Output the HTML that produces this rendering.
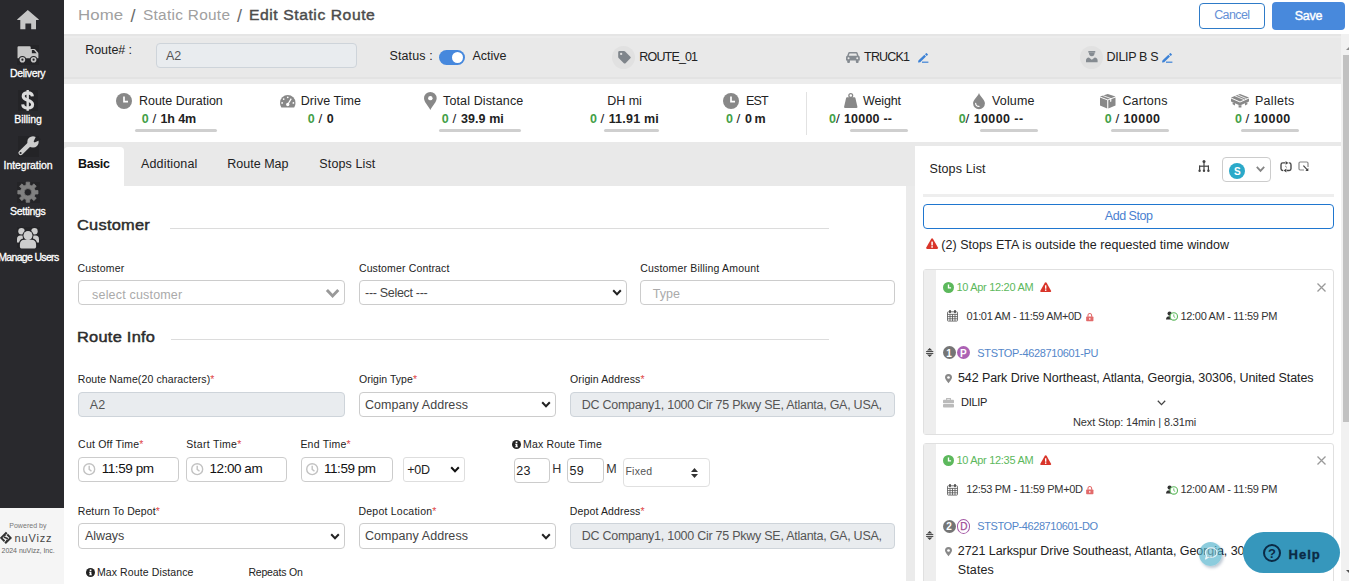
<!DOCTYPE html><html><head><meta charset="utf-8"><title>Edit Static Route</title><style>

html,body{margin:0;padding:0;width:1349px;height:584px;overflow:hidden;}
body{background:#fff;position:relative;font-family:"Liberation Sans",sans-serif;}
#root{position:absolute;left:0;top:0;width:1349px;height:584px;overflow:hidden;background:#fff;}
.b{position:absolute;box-sizing:border-box;}
.t{position:absolute;white-space:nowrap;line-height:1;margin:0;padding:0;}
.i{position:absolute;overflow:visible;}

</style></head><body><div id="root">
<div class="b" style="left:64px;top:34px;width:1277px;height:50px;background:#ececec;"></div>
<div class="b" style="left:64px;top:34px;width:1277px;height:2px;background:#e5e5e5;"></div>
<div class="b" style="left:64px;top:38px;width:1277px;height:39px;background:#e9e9e9;"></div>
<div class="b" style="left:64px;top:77px;width:1277px;height:2px;background:#e3e3e3;"></div>
<div class="b" style="left:64px;top:142px;width:1277px;height:44px;background:#e9e9e9;"></div>
<div class="b" style="left:906px;top:186px;width:9px;height:395px;background:#ebebeb;"></div>
<div class="b" style="left:64px;top:147px;width:60px;height:40px;background:#fff;border-radius:4px 4px 0 0;"></div>
<div class="b" style="left:915px;top:146px;width:426px;height:435px;background:#fff;"></div>
<div class="b" style="left:1341px;top:34px;width:8px;height:547px;background:#f1f1f1;"></div>
<div class="b" style="left:1343px;top:55px;width:6px;height:367px;background:#c1c1c1;"></div>
<div class="b" style="left:0px;top:0px;width:64px;height:508.8px;background:#29292d;"></div>
<div class="b" style="left:0px;top:508px;width:64px;height:76px;background:#f5f5f5;"></div>
<div class="b" style="left:17px;top:44.5px;width:22px;height:20px;background:#242427;"></div>
<div class="b" style="left:17.5px;top:90px;width:20.5px;height:21px;background:#242427;"></div>
<div class="b" style="left:17.5px;top:135.7px;width:21.5px;height:21px;background:#242427;"></div>
<div class="b" style="left:17px;top:181.5px;width:22.5px;height:21.5px;background:#242427;"></div>
<div class="b" style="left:17px;top:227px;width:22.5px;height:21px;background:#242427;"></div>
<span class="t" style="left:77.85px;top:8px;font-size:14px;color:#a0a0a0;letter-spacing:0.071px;transform:scaleX(1.2);transform-origin:0 0;">Home</span>
<span class="t" style="left:130.40px;top:7px;font-size:18px;color:#6a6a6a;letter-spacing:1.137px;">/</span>
<span class="t" style="left:142.81px;top:8px;font-size:14px;color:#a0a0a0;letter-spacing:0.253px;transform:scaleX(1.1);transform-origin:0 0;">Static Route</span>
<span class="t" style="left:236.90px;top:7px;font-size:18px;color:#6a6a6a;letter-spacing:0.737px;">/</span>
<span class="t" style="left:249.14px;top:8px;font-size:14px;color:#4c4c4c;letter-spacing:0.505px;transform:scaleX(1.12);transform-origin:0 0;-webkit-text-stroke:0.4px #4c4c4c;">Edit Static Route</span>
<div class="b" style="left:1199px;top:3px;width:66px;height:26px;background:#fff;border:1.5px solid #2e7bc8;border-radius:4px;"></div>
<span class="t" style="left:1214.17px;top:9px;font-size:12.5px;color:#6590d6;letter-spacing:-0.602px;">Cancel</span>
<div class="b" style="left:1272px;top:2px;width:73px;height:28px;background:#4889dc;border-radius:4px;"></div>
<span class="t" style="left:1294.74px;top:10px;font-size:12.5px;color:#fff;letter-spacing:-0.238px;-webkit-text-stroke:0.4px #fff;">Save</span>
<span class="t" style="left:85.20px;top:44px;font-size:12.5px;color:#222;letter-spacing:-0.051px;">Route# :</span>
<div class="b" style="left:156px;top:43px;width:201px;height:25px;background:#e9ecef;border:1px solid #ced4da;border-radius:4px;"></div>
<span class="t" style="left:166.00px;top:50px;font-size:12.5px;color:#555;letter-spacing:-0.212px;">A2</span>
<span class="t" style="left:389.44px;top:50px;font-size:12.5px;color:#222;letter-spacing:0.140px;">Status :</span>
<div class="b" style="left:439px;top:50px;width:26px;height:15px;background:#4688dd;border-radius:8px;"></div>
<div class="b" style="left:452px;top:52px;width:11px;height:11px;background:#fff;border-radius:50%;"></div>
<span class="t" style="left:472.50px;top:50px;font-size:12.5px;color:#222;letter-spacing:-0.005px;">Active</span>
<div class="b" style="left:612px;top:46px;width:23px;height:23px;background:#e1e1e1;border-radius:50%;"></div>
<span class="t" style="left:639.30px;top:51px;font-size:12.5px;color:#222;letter-spacing:-0.833px;">ROUTE_01</span>
<span class="t" style="left:864.05px;top:51px;font-size:12.5px;color:#222;letter-spacing:-0.796px;">TRUCK1</span>
<div class="b" style="left:1080px;top:46px;width:23px;height:23px;background:#e1e1e1;border-radius:50%;"></div>
<span class="t" style="left:1106.60px;top:51px;font-size:12.5px;color:#222;letter-spacing:-0.332px;">DILIP B S</span>
<span class="t" style="left:139.00px;top:95px;font-size:12.5px;color:#222;letter-spacing:-0.024px;">Route Duration</span>
<span class="t" style="left:141.76px;top:113px;font-size:12.5px;color:#43a047;font-weight:700;letter-spacing:0.037px;">0</span>
<span class="t" style="left:152.40px;top:112px;font-size:13.5px;color:#222;letter-spacing:1.388px;">/</span>
<span class="t" style="left:160.45px;top:113px;font-size:12.5px;color:#222;font-weight:700;letter-spacing:-0.084px;">1h 4m</span>
<div class="b" style="left:135px;top:129px;width:82px;height:2.6px;background:#cfcfcf;border-radius:2px;"></div>
<span class="t" style="left:300.80px;top:95px;font-size:12.5px;color:#222;letter-spacing:0.051px;">Drive Time</span>
<span class="t" style="left:307.76px;top:113px;font-size:12.5px;color:#43a047;font-weight:700;letter-spacing:0.038px;">0</span>
<span class="t" style="left:318.40px;top:112px;font-size:13.5px;color:#222;letter-spacing:1.387px;">/</span>
<span class="t" style="left:326.76px;top:113px;font-size:12.5px;color:#222;font-weight:700;letter-spacing:-0.262px;">0</span>
<span class="t" style="left:443.05px;top:95px;font-size:12.5px;color:#222;letter-spacing:0.127px;">Total Distance</span>
<span class="t" style="left:441.76px;top:113px;font-size:12.5px;color:#43a047;font-weight:700;letter-spacing:0.038px;">0</span>
<span class="t" style="left:452.40px;top:112px;font-size:13.5px;color:#222;letter-spacing:1.387px;">/</span>
<span class="t" style="left:460.95px;top:113px;font-size:12.5px;color:#222;font-weight:700;letter-spacing:0.085px;">39.9 mi</span>
<div class="b" style="left:439.3px;top:129px;width:81.4px;height:2.6px;background:#cfcfcf;border-radius:2px;"></div>
<span class="t" style="left:607.20px;top:95px;font-size:12.5px;color:#222;letter-spacing:-0.019px;">DH mi</span>
<span class="t" style="left:589.96px;top:113px;font-size:12.5px;color:#43a047;font-weight:700;letter-spacing:0.038px;">0</span>
<span class="t" style="left:600.60px;top:112px;font-size:13.5px;color:#222;letter-spacing:1.387px;">/</span>
<span class="t" style="left:608.65px;top:113px;font-size:12.5px;color:#222;font-weight:700;letter-spacing:0.221px;">11.91 mi</span>
<div class="b" style="left:604px;top:129px;width:54.5px;height:2.6px;background:#cfcfcf;border-radius:2px;"></div>
<span class="t" style="left:746.00px;top:95px;font-size:12.5px;color:#222;letter-spacing:-0.775px;">EST</span>
<span class="t" style="left:725.96px;top:113px;font-size:12.5px;color:#43a047;font-weight:700;letter-spacing:0.038px;">0</span>
<span class="t" style="left:736.60px;top:112px;font-size:13.5px;color:#222;letter-spacing:1.387px;">/</span>
<span class="t" style="left:744.96px;top:113px;font-size:12.5px;color:#222;font-weight:700;letter-spacing:-0.381px;">0 m</span>
<div class="b" style="left:806px;top:92px;width:1px;height:43px;background:#e2e2e2;"></div>
<span class="t" style="left:863.00px;top:95px;font-size:12.5px;color:#222;letter-spacing:-0.129px;">Weight</span>
<span class="t" style="left:828.96px;top:113px;font-size:12.5px;color:#43a047;font-weight:700;letter-spacing:0.038px;">0</span>
<span class="t" style="left:835.90px;top:112px;font-size:13.5px;color:#222;letter-spacing:1.587px;">/</span>
<span class="t" style="left:843.95px;top:113px;font-size:12.5px;color:#222;font-weight:700;letter-spacing:0.210px;">10000 --</span>
<div class="b" style="left:850px;top:129px;width:58px;height:2.6px;background:#cfcfcf;border-radius:2px;"></div>
<span class="t" style="left:992.00px;top:95px;font-size:12.5px;color:#222;letter-spacing:0.164px;">Volume</span>
<span class="t" style="left:958.66px;top:113px;font-size:12.5px;color:#43a047;font-weight:700;letter-spacing:0.038px;">0</span>
<span class="t" style="left:965.60px;top:112px;font-size:13.5px;color:#222;letter-spacing:1.587px;">/</span>
<span class="t" style="left:973.65px;top:113px;font-size:12.5px;color:#222;font-weight:700;letter-spacing:0.410px;">10000 --</span>
<div class="b" style="left:980.3px;top:129px;width:57.7px;height:2.6px;background:#cfcfcf;border-radius:2px;"></div>
<span class="t" style="left:1122.38px;top:95px;font-size:12.5px;color:#222;letter-spacing:0.216px;">Cartons</span>
<span class="t" style="left:1104.76px;top:113px;font-size:12.5px;color:#43a047;font-weight:700;letter-spacing:0.037px;">0</span>
<span class="t" style="left:1115.40px;top:112px;font-size:13.5px;color:#222;letter-spacing:1.388px;">/</span>
<span class="t" style="left:1123.45px;top:113px;font-size:12.5px;color:#222;font-weight:700;letter-spacing:0.461px;">10000</span>
<div class="b" style="left:1110.5px;top:129px;width:58.5px;height:2.6px;background:#cfcfcf;border-radius:2px;"></div>
<span class="t" style="left:1255.00px;top:95px;font-size:12.5px;color:#222;letter-spacing:0.270px;">Pallets</span>
<span class="t" style="left:1234.96px;top:113px;font-size:12.5px;color:#43a047;font-weight:700;letter-spacing:0.037px;">0</span>
<span class="t" style="left:1245.60px;top:112px;font-size:13.5px;color:#222;letter-spacing:1.388px;">/</span>
<span class="t" style="left:1253.65px;top:113px;font-size:12.5px;color:#222;font-weight:700;letter-spacing:0.461px;">10000</span>
<div class="b" style="left:1240.6px;top:129px;width:58.2px;height:2.6px;background:#cfcfcf;border-radius:2px;"></div>
<span class="t" style="left:77.99px;top:158px;font-size:12.5px;color:#111;font-weight:700;letter-spacing:-0.354px;">Basic</span>
<span class="t" style="left:141.00px;top:158px;font-size:12.5px;color:#222;letter-spacing:0.153px;">Additional</span>
<span class="t" style="left:227.30px;top:158px;font-size:12.5px;color:#222;letter-spacing:0.009px;">Route Map</span>
<span class="t" style="left:319.34px;top:158px;font-size:12.5px;color:#222;letter-spacing:0.123px;">Stops List</span>
<span class="t" style="left:77.12px;top:218px;font-size:14.5px;color:#2c2c2c;letter-spacing:0.226px;transform:scaleX(1.13);transform-origin:0 0;-webkit-text-stroke:0.45px #2c2c2c;">Customer</span>
<div class="b" style="left:170px;top:228px;width:659px;height:1px;background:#dcdcdc;"></div>
<span class="t" style="left:77.40px;top:263px;font-size:10.5px;color:#222;letter-spacing:0.187px;">Customer</span>
<div class="b" style="left:78px;top:280px;width:267px;height:25px;background:#fff;border:1px solid #ccc;border-radius:4px;"></div>
<span class="t" style="left:92.09px;top:289px;font-size:12.5px;color:#aaa;letter-spacing:0.182px;">select customer</span>
<svg class="i" style="left:325.8px;top:288.6px;" width="13.2" height="9.4" viewBox="0 0 13.2 9.4"><path d="M1.9 2 L6.6 6.9 L11.3 2" fill="none" stroke="#999" stroke-width="2.9" stroke-linecap="square" stroke-linejoin="miter"/></svg>
<span class="t" style="left:358.90px;top:263px;font-size:10.5px;color:#222;letter-spacing:0.152px;">Customer Contract</span>
<div class="b" style="left:359px;top:280px;width:268px;height:25px;background:#fff;border:1px solid #ccc;border-radius:4px;"></div>
<span class="t" style="left:365.10px;top:287px;font-size:12.5px;color:#444;letter-spacing:-0.310px;">--- Select ---</span>
<svg class="i" style="left:611.8px;top:288.8px;" width="10" height="7" viewBox="0 0 10 7"><path d="M1.2 1.3 L5 5.2 L8.8 1.3" fill="none" stroke="#222" stroke-width="2" stroke-linecap="butt" stroke-linejoin="miter"/></svg>
<span class="t" style="left:640.20px;top:263px;font-size:10.5px;color:#222;letter-spacing:0.182px;">Customer Billing Amount</span>
<div class="b" style="left:640px;top:280px;width:255px;height:25px;background:#fff;border:1px solid #ccc;border-radius:4px;"></div>
<span class="t" style="left:652.75px;top:288px;font-size:12.5px;color:#aaa;letter-spacing:0.055px;">Type</span>
<span class="t" style="left:77.16px;top:330px;font-size:14.5px;color:#2c2c2c;letter-spacing:0.234px;transform:scaleX(1.13);transform-origin:0 0;-webkit-text-stroke:0.45px #2c2c2c;">Route Info</span>
<div class="b" style="left:171px;top:339px;width:658px;height:1px;background:#dcdcdc;"></div>
<span class="t" style="left:77.69px;top:374px;font-size:10.5px;color:#222;letter-spacing:0.121px;">Route Name(20 characters)<span style="color:#e04848">*</span></span>
<div class="b" style="left:78px;top:392px;width:267px;height:25px;background:#e9ecef;border:1px solid #ced4da;border-radius:4px;"></div>
<span class="t" style="left:89.80px;top:399px;font-size:12.5px;color:#555;letter-spacing:0.188px;">A2</span>
<span class="t" style="left:358.96px;top:374px;font-size:10.5px;color:#222;letter-spacing:0.037px;">Origin Type<span style="color:#e04848">*</span></span>
<div class="b" style="left:359px;top:392px;width:197px;height:25px;background:#fff;border:1px solid #ccc;border-radius:4px;"></div>
<span class="t" style="left:364.98px;top:399px;font-size:12.5px;color:#444;letter-spacing:0.060px;">Company Address</span>
<svg class="i" style="left:541px;top:401.0px;" width="10" height="7" viewBox="0 0 10 7"><path d="M1.2 1.3 L5 5.2 L8.8 1.3" fill="none" stroke="#222" stroke-width="2" stroke-linecap="butt" stroke-linejoin="miter"/></svg>
<span class="t" style="left:570.06px;top:374px;font-size:10.5px;color:#222;letter-spacing:0.111px;">Origin Address<span style="color:#e04848">*</span></span>
<div class="b" style="left:570px;top:392px;width:325px;height:25px;background:#e9ecef;border:1px solid #ced4da;border-radius:4px;"></div>
<span class="t" style="left:581.70px;top:399px;font-size:12.5px;color:#555;letter-spacing:-0.260px;">DC Company1, 1000 Cir 75 Pkwy SE, Atlanta, GA, USA,</span>
<span class="t" style="left:78.10px;top:439px;font-size:10.5px;color:#222;letter-spacing:0.203px;">Cut Off Time<span style="color:#e04848">*</span></span>
<span class="t" style="left:186.26px;top:439px;font-size:10.5px;color:#222;letter-spacing:0.317px;">Start Time<span style="color:#e04848">*</span></span>
<span class="t" style="left:300.39px;top:439px;font-size:10.5px;color:#222;letter-spacing:0.229px;">End Time<span style="color:#e04848">*</span></span>
<div class="b" style="left:78px;top:457px;width:101px;height:25px;background:#fff;border:1px solid #ccc;border-radius:4px;"></div>
<svg class="i" style="left:83.1px;top:462.9px;" width="12.4" height="12.4" viewBox="0 0 12 12"><circle cx="6" cy="6" r="5.3" fill="none" stroke="#c2c2c2" stroke-width="1.35"/><path d="M6 2.7 V6.2 L8.2 8" fill="none" stroke="#c2c2c2" stroke-width="1.35"/></svg>
<span class="t" style="left:101.70px;top:462px;font-size:13.5px;color:#111;letter-spacing:-0.431px;">11:59 pm</span>
<div class="b" style="left:186px;top:457px;width:101px;height:25px;background:#fff;border:1px solid #ccc;border-radius:4px;"></div>
<svg class="i" style="left:191.10000000000002px;top:462.9px;" width="12.4" height="12.4" viewBox="0 0 12 12"><circle cx="6" cy="6" r="5.3" fill="none" stroke="#c2c2c2" stroke-width="1.35"/><path d="M6 2.7 V6.2 L8.2 8" fill="none" stroke="#c2c2c2" stroke-width="1.35"/></svg>
<span class="t" style="left:209.50px;top:462px;font-size:13.5px;color:#111;letter-spacing:-0.445px;">12:00 am</span>
<div class="b" style="left:301px;top:457px;width:92px;height:25px;background:#fff;border:1px solid #ccc;border-radius:4px;"></div>
<svg class="i" style="left:306.1px;top:462.9px;" width="12.4" height="12.4" viewBox="0 0 12 12"><circle cx="6" cy="6" r="5.3" fill="none" stroke="#c2c2c2" stroke-width="1.35"/><path d="M6 2.7 V6.2 L8.2 8" fill="none" stroke="#c2c2c2" stroke-width="1.35"/></svg>
<span class="t" style="left:324.00px;top:462px;font-size:13.5px;color:#111;letter-spacing:-0.459px;">11:59 pm</span>
<div class="b" style="left:403px;top:457px;width:62px;height:25px;background:#fff;border:1px solid #dedede;border-radius:3px;"></div>
<span class="t" style="left:407.34px;top:464px;font-size:12.5px;color:#222;letter-spacing:-0.263px;">+0D</span>
<svg class="i" style="left:450.2px;top:465.8px;" width="10" height="7" viewBox="0 0 10 7"><path d="M1.2 1.3 L5 5.2 L8.8 1.3" fill="none" stroke="#111" stroke-width="2" stroke-linecap="butt" stroke-linejoin="miter"/></svg>
<span class="t" style="left:522.99px;top:439px;font-size:10.5px;color:#222;letter-spacing:0.180px;">Max Route Time</span>
<div class="b" style="left:514px;top:458px;width:36px;height:25px;background:#fff;border:1px solid #ccc;border-radius:4px;"></div>
<span class="t" style="left:516.17px;top:465px;font-size:12.5px;color:#222;letter-spacing:0.436px;">23</span>
<span class="t" style="left:552.30px;top:463px;font-size:12.5px;color:#333;letter-spacing:1.338px;">H</span>
<div class="b" style="left:567px;top:458px;width:37px;height:25px;background:#fff;border:1px solid #ccc;border-radius:4px;"></div>
<span class="t" style="left:569.40px;top:465px;font-size:12.5px;color:#222;letter-spacing:0.473px;">59</span>
<span class="t" style="left:606.20px;top:463px;font-size:12.5px;color:#333;letter-spacing:1.362px;">M</span>
<div class="b" style="left:623px;top:458px;width:87px;height:29px;background:#fff;border:1px solid #e0e0e0;border-radius:4px;"></div>
<span class="t" style="left:625.39px;top:466px;font-size:10.5px;color:#555;letter-spacing:0.272px;">Fixed</span>
<svg class="i" style="left:690.8px;top:467.7px;" width="7" height="10" viewBox="0 0 7 10"><path d="M3.5 0 L7 4 H0 Z M0 6 H7 L3.5 10 Z" fill="#333"/></svg>
<span class="t" style="left:77.69px;top:506px;font-size:10.5px;color:#222;letter-spacing:0.121px;">Return To Depot<span style="color:#e04848">*</span></span>
<div class="b" style="left:78px;top:523px;width:267px;height:26px;background:#fff;border:1px solid #ccc;border-radius:4px;"></div>
<span class="t" style="left:85.00px;top:530px;font-size:12.5px;color:#444;letter-spacing:-0.071px;">Always</span>
<svg class="i" style="left:329.8px;top:532.5px;" width="10" height="7" viewBox="0 0 10 7"><path d="M1.2 1.3 L5 5.2 L8.8 1.3" fill="none" stroke="#222" stroke-width="2" stroke-linecap="butt" stroke-linejoin="miter"/></svg>
<span class="t" style="left:358.49px;top:506px;font-size:10.5px;color:#222;letter-spacing:0.224px;">Depot Location<span style="color:#e04848">*</span></span>
<div class="b" style="left:359px;top:523px;width:197px;height:26px;background:#fff;border:1px solid #ccc;border-radius:4px;"></div>
<span class="t" style="left:364.98px;top:530px;font-size:12.5px;color:#444;letter-spacing:0.060px;">Company Address</span>
<svg class="i" style="left:541px;top:532.5px;" width="10" height="7" viewBox="0 0 10 7"><path d="M1.2 1.3 L5 5.2 L8.8 1.3" fill="none" stroke="#222" stroke-width="2" stroke-linecap="butt" stroke-linejoin="miter"/></svg>
<span class="t" style="left:569.69px;top:506px;font-size:10.5px;color:#222;letter-spacing:0.148px;">Depot Address<span style="color:#e04848">*</span></span>
<div class="b" style="left:570px;top:523px;width:325px;height:26px;background:#e9ecef;border:1px solid #ced4da;border-radius:4px;"></div>
<span class="t" style="left:581.70px;top:530px;font-size:12.5px;color:#555;letter-spacing:-0.260px;">DC Company1, 1000 Cir 75 Pkwy SE, Atlanta, GA, USA,</span>
<span class="t" style="left:96.89px;top:567px;font-size:10.5px;color:#222;letter-spacing:0.120px;">Max Route Distance</span>
<span class="t" style="left:248.39px;top:567px;font-size:10.5px;color:#222;letter-spacing:-0.174px;">Repeats On</span>
<svg class="i" style="left:512.0px;top:439.90000000000003px;" width="9" height="9" viewBox="0 0 16 16"><circle cx="8" cy="8" r="8" fill="#222"/><rect x="6.6" y="2.6" width="3" height="2.8" fill="#fff"/><path d="M5.6 6.8 H9.6 V11.4 H10.6 V13 H5.6 V11.4 H6.6 V8.4 H5.6 Z" fill="#fff"/></svg>
<svg class="i" style="left:85.6px;top:567.6999999999999px;" width="9" height="9" viewBox="0 0 16 16"><circle cx="8" cy="8" r="8" fill="#222"/><rect x="6.6" y="2.6" width="3" height="2.8" fill="#fff"/><path d="M5.6 6.8 H9.6 V11.4 H10.6 V13 H5.6 V11.4 H6.6 V8.4 H5.6 Z" fill="#fff"/></svg>
<span class="t" style="left:929.44px;top:163px;font-size:12.5px;color:#222;letter-spacing:0.134px;">Stops List</span>
<div class="b" style="left:923px;top:194px;width:411px;height:3px;background:#eeeeee;"></div>
<div class="b" style="left:1222px;top:157px;width:49px;height:25px;background:#fff;border:1px solid #ccc;border-radius:4px;"></div>
<div class="b" style="left:1229px;top:163px;width:16px;height:16px;background:#2aa9c9;border-radius:50%;"></div>
<span class="t" style="left:1233.95px;top:167px;font-size:10px;color:#fff;font-weight:700;letter-spacing:0.037px;">S</span>
<svg class="i" style="left:1255.8px;top:166px;" width="9" height="6" viewBox="0 0 9 6"><path d="M0.8 0.8 L4.5 4.8 L8.2 0.8" fill="none" stroke="#858585" stroke-width="1.8"/></svg>
<svg class="i" style="left:1197.5px;top:160px;" width="12" height="12" viewBox="0 0 12 12"><g fill="#444"><circle cx="6" cy="1.5" r="1.5"/><rect x="5.4" y="2" width="1.2" height="9"/><rect x="1" y="5.6" width="10" height="1.2"/><rect x="1" y="5.6" width="1.2" height="5"/><rect x="9.8" y="5.6" width="1.2" height="5"/><circle cx="1.6" cy="10.8" r="1.2"/><circle cx="6" cy="10.8" r="1.2"/><circle cx="10.4" cy="10.8" r="1.2"/></g></svg>
<svg class="i" style="left:1279.5px;top:160.6px;" width="12" height="11.4" viewBox="0 0 12 11.4"><g fill="none" stroke="#444" stroke-width="1.35"><path d="M5.2 1.9 H2.8 Q1 1.9 1 3.7 V7.7 Q1 9.5 2.8 9.5 H3.2"/><path d="M6.8 9.5 H9.2 Q11 9.5 11 7.7 V3.7 Q11 1.9 9.2 1.9 H8.8"/></g><path d="M5.6 0 L8.4 1.9 L5.6 3.8 Z M6.4 7.6 L3.6 9.5 L6.4 11.4 Z" fill="#444"/><path d="M5.2 5 L6.8 6.4" stroke="#666" stroke-width="0.9"/></svg>
<svg class="i" style="left:1298px;top:161px;" width="11" height="11" viewBox="0 0 11 11"><path d="M10 6 V2.2 Q10 1 8.8 1 H2.2 Q1 1 1 2.2 V7.8 Q1 9 2.2 9 H6" fill="none" stroke="#888" stroke-width="1.2"/><path d="M5.4 4.6 L9.8 9.4" stroke="#444" stroke-width="1.2"/><path d="M10.3 7 V10 H7.4 Z" fill="#444"/></svg>
<div class="b" style="left:923px;top:204px;width:411px;height:25px;background:#fff;border:1.5px solid #1f76cf;border-radius:4px;"></div>
<span class="t" style="left:1104.80px;top:210px;font-size:12.5px;color:#4a80d0;letter-spacing:-0.473px;">Add Stop</span>
<svg class="i" style="left:926.3px;top:238.4px;" width="12.2" height="11.3" viewBox="0 0 24 22"><path d="M12 0.6 Q13.2 0.6 13.9 1.8 L23.5 18.6 Q24.6 21.4 21.6 21.4 H2.4 Q-0.6 21.4 0.5 18.6 L10.1 1.8 Q10.8 0.6 12 0.6 Z" fill="#d9352a"/><rect x="10.5" y="7" width="3" height="7.4" rx="0.6" fill="#fff"/><circle cx="12" cy="17.4" r="1.7" fill="#fff"/></svg>
<span class="t" style="left:941.25px;top:239px;font-size:12.5px;color:#222;letter-spacing:0.051px;">(2) Stops ETA is outside the requested time window</span>
<div class="b" style="left:923px;top:269px;width:411px;height:166px;background:#fff;border:1px solid #e0e0e0;border-radius:3px;"></div>
<div class="b" style="left:924px;top:270px;width:12px;height:164px;background:#eeeeee;"></div>
<svg class="i" style="left:942.5px;top:281.8px;" width="11" height="11" viewBox="0 0 12 12"><circle cx="6" cy="6" r="6" fill="#5cb85c"/><path d="M6 2.6 V6.4 H8.8" fill="none" stroke="#fff" stroke-width="1.5"/></svg>
<span class="t" style="left:956.39px;top:282px;font-size:11px;color:#5cb85c;letter-spacing:-0.292px;">10 Apr 12:20 AM</span>
<svg class="i" style="left:1040px;top:281.8px;" width="11.4" height="10.3" viewBox="0 0 24 22"><path d="M12 0.6 Q13.2 0.6 13.9 1.8 L23.5 18.6 Q24.6 21.4 21.6 21.4 H2.4 Q-0.6 21.4 0.5 18.6 L10.1 1.8 Q10.8 0.6 12 0.6 Z" fill="#d9352a"/><rect x="10.5" y="7" width="3" height="7.4" rx="0.6" fill="#fff"/><circle cx="12" cy="17.4" r="1.7" fill="#fff"/></svg>
<svg class="i" style="left:1317px;top:283px;" width="9" height="9" viewBox="0 0 9 9"><path d="M0.5 0.5 L8.5 8.5 M8.5 0.5 L0.5 8.5" stroke="#999" stroke-width="1.25"/></svg>
<svg class="i" style="left:946.8px;top:310.4px;" width="11" height="11.6" viewBox="0 0 11 11.6"><g fill="none" stroke="#555" stroke-width="0.8"><rect x="0.5" y="1.8" width="10" height="9.3" rx="0.8"/><path d="M0.5 4.4 H10.5 M3 4.4 V11 M5.5 4.4 V11 M8 4.4 V11 M0.5 6.6 H10.5 M0.5 8.8 H10.5"/></g><rect x="2.2" y="0" width="1.6" height="3.2" rx="0.6" fill="#444"/><rect x="7.2" y="0" width="1.6" height="3.2" rx="0.6" fill="#444"/></svg>
<span class="t" style="left:966.62px;top:311px;font-size:11px;color:#333;letter-spacing:-0.344px;">01:01 AM - 11:59 AM+0D</span>
<svg class="i" style="left:1086.3px;top:312.6px;" width="7.6" height="8.2" viewBox="0 0 8 9"><rect x="0" y="3.8" width="8" height="5.2" rx="0.8" fill="#e26a6a"/><path d="M2 4 V2.6 A2 2 0 0 1 6 2.6 V4" fill="none" stroke="#e26a6a" stroke-width="1.2"/><rect x="3.4" y="5.4" width="1.2" height="2" fill="#fff"/></svg>
<svg class="i" style="left:1166px;top:311.4px;" width="12" height="10" viewBox="0 0 12 10"><circle cx="3.6" cy="2.6" r="2.1" fill="#333"/><path d="M0 8.6 Q0 5.2 3.6 5.2 Q5 5.2 5.6 5.8 L6.6 8.6 Z" fill="#333"/><circle cx="7.8" cy="5.4" r="3.7" fill="#fff" stroke="#5cb85c" stroke-width="1.1"/><path d="M7.8 3.4 V5.6 L9.2 6.6" fill="none" stroke="#5cb85c" stroke-width="0.9"/></svg>
<span class="t" style="left:1180.49px;top:311px;font-size:11px;color:#333;letter-spacing:-0.309px;">12:00 AM - 11:59 PM</span>
<div class="b" style="left:943px;top:346px;width:13px;height:13px;background:#757575;border-radius:50%;"></div>
<span class="t" style="left:946.17px;top:349px;font-size:10px;color:#fff;font-weight:700;letter-spacing:0.113px;">1</span>
<div class="b" style="left:957px;top:346px;width:13px;height:13px;background:#ac62b4;border-radius:50%;"></div>
<span class="t" style="left:959.98px;top:349px;font-size:10px;color:#fff;font-weight:700;letter-spacing:0.650px;">P</span>
<span class="t" style="left:977.30px;top:348px;font-size:11px;color:#5486c9;letter-spacing:-0.341px;">STSTOP-4628710601-PU</span>
<svg class="i" style="left:944.5px;top:373.9px;" width="7" height="9.4" viewBox="0 0 12 16"><path d="M6 0 A6 6 0 0 1 12 6 C12 9 8.4 12.2 6 16 C3.6 12.2 0 9 0 6 A6 6 0 0 1 6 0 Z" fill="#888"/><circle cx="6" cy="6" r="2.3" fill="#fff"/></svg>
<span class="t" style="left:957.90px;top:372px;font-size:12.5px;color:#222;letter-spacing:-0.079px;">542 Park Drive Northeast, Atlanta, Georgia, 30306, United States</span>
<svg class="i" style="left:943px;top:397.6px;" width="11" height="9.6" viewBox="0 0 11 9.6"><path d="M3.6 2 V0.6 H7.4 V2" fill="none" stroke="#bbb" stroke-width="1.1"/><rect x="0" y="1.8" width="11" height="3.4" rx="0.8" fill="#bbb"/><rect x="0" y="5.9" width="11" height="3.7" rx="0.8" fill="#bbb"/></svg>
<span class="t" style="left:961.12px;top:397px;font-size:11px;color:#222;letter-spacing:-0.303px;">DILIP</span>
<svg class="i" style="left:1156.5px;top:399.9px;" width="9" height="6" viewBox="0 0 9 6"><path d="M0.8 0.8 L4.5 4.6 L8.2 0.8" fill="none" stroke="#444" stroke-width="1.3"/></svg>
<span class="t" style="left:1073.03px;top:417px;font-size:11px;color:#333;letter-spacing:-0.129px;">Next Stop: 14min | 8.31mi</span>
<svg class="i" style="left:926.4px;top:348.0px;" width="7.4" height="9" viewBox="0 0 8 10"><path d="M4 0 L7 2.7 H1 Z M1 7.3 H7 L4 10 Z" fill="#444"/><rect x="0" y="3.4" width="8" height="1.1" fill="#444"/><rect x="0" y="5.5" width="8" height="1.1" fill="#444"/></svg>
<div class="b" style="left:923px;top:443px;width:411px;height:177px;background:#fff;border:1px solid #e0e0e0;border-radius:3px;"></div>
<div class="b" style="left:924px;top:444px;width:12px;height:137px;background:#eeeeee;"></div>
<svg class="i" style="left:942.5px;top:455.0px;" width="11" height="11" viewBox="0 0 12 12"><circle cx="6" cy="6" r="6" fill="#5cb85c"/><path d="M6 2.6 V6.4 H8.8" fill="none" stroke="#fff" stroke-width="1.5"/></svg>
<span class="t" style="left:956.39px;top:455px;font-size:11px;color:#5cb85c;letter-spacing:-0.292px;">10 Apr 12:35 AM</span>
<svg class="i" style="left:1040px;top:455.0px;" width="11.4" height="10.3" viewBox="0 0 24 22"><path d="M12 0.6 Q13.2 0.6 13.9 1.8 L23.5 18.6 Q24.6 21.4 21.6 21.4 H2.4 Q-0.6 21.4 0.5 18.6 L10.1 1.8 Q10.8 0.6 12 0.6 Z" fill="#d9352a"/><rect x="10.5" y="7" width="3" height="7.4" rx="0.6" fill="#fff"/><circle cx="12" cy="17.4" r="1.7" fill="#fff"/></svg>
<svg class="i" style="left:1317px;top:456.2px;" width="9" height="9" viewBox="0 0 9 9"><path d="M0.5 0.5 L8.5 8.5 M8.5 0.5 L0.5 8.5" stroke="#999" stroke-width="1.25"/></svg>
<svg class="i" style="left:946.8px;top:483.59999999999997px;" width="11" height="11.6" viewBox="0 0 11 11.6"><g fill="none" stroke="#555" stroke-width="0.8"><rect x="0.5" y="1.8" width="10" height="9.3" rx="0.8"/><path d="M0.5 4.4 H10.5 M3 4.4 V11 M5.5 4.4 V11 M8 4.4 V11 M0.5 6.6 H10.5 M0.5 8.8 H10.5"/></g><rect x="2.2" y="0" width="1.6" height="3.2" rx="0.6" fill="#444"/><rect x="7.2" y="0" width="1.6" height="3.2" rx="0.6" fill="#444"/></svg>
<span class="t" style="left:966.19px;top:484px;font-size:11px;color:#333;letter-spacing:-0.323px;">12:53 PM - 11:59 PM+0D</span>
<svg class="i" style="left:1086.3px;top:485.8px;" width="7.6" height="8.2" viewBox="0 0 8 9"><rect x="0" y="3.8" width="8" height="5.2" rx="0.8" fill="#e26a6a"/><path d="M2 4 V2.6 A2 2 0 0 1 6 2.6 V4" fill="none" stroke="#e26a6a" stroke-width="1.2"/><rect x="3.4" y="5.4" width="1.2" height="2" fill="#fff"/></svg>
<svg class="i" style="left:1166px;top:484.59999999999997px;" width="12" height="10" viewBox="0 0 12 10"><circle cx="3.6" cy="2.6" r="2.1" fill="#333"/><path d="M0 8.6 Q0 5.2 3.6 5.2 Q5 5.2 5.6 5.8 L6.6 8.6 Z" fill="#333"/><circle cx="7.8" cy="5.4" r="3.7" fill="#fff" stroke="#5cb85c" stroke-width="1.1"/><path d="M7.8 3.4 V5.6 L9.2 6.6" fill="none" stroke="#5cb85c" stroke-width="0.9"/></svg>
<span class="t" style="left:1180.49px;top:484px;font-size:11px;color:#333;letter-spacing:-0.309px;">12:00 AM - 11:59 PM</span>
<div class="b" style="left:943px;top:520px;width:13px;height:13px;background:#757575;border-radius:50%;"></div>
<span class="t" style="left:946.29px;top:522px;font-size:10px;color:#fff;font-weight:700;letter-spacing:0.725px;">2</span>
<div class="b" style="left:956.8px;top:519px;width:13.4px;height:15px;background:#fff;border:1px solid #a457a4;border-radius:50%;"></div>
<span class="t" style="left:960.19px;top:522px;font-size:10px;color:#a04a96;letter-spacing:-0.038px;-webkit-text-stroke:0.25px #a04a96;">D</span>
<span class="t" style="left:977.30px;top:521px;font-size:11px;color:#5486c9;letter-spacing:-0.422px;">STSTOP-4628710601-DO</span>
<svg class="i" style="left:944.5px;top:547.0999999999999px;" width="7" height="9.4" viewBox="0 0 12 16"><path d="M6 0 A6 6 0 0 1 12 6 C12 9 8.4 12.2 6 16 C3.6 12.2 0 9 0 6 A6 6 0 0 1 6 0 Z" fill="#888"/><circle cx="6" cy="6" r="2.3" fill="#fff"/></svg>
<span class="t" style="left:957.77px;top:545px;font-size:12.5px;color:#222;letter-spacing:-0.060px;">2721 Larkspur Drive Southeast, Atlanta, Georgia, 30306, United</span>
<span class="t" style="left:957.84px;top:564px;font-size:12.5px;color:#222;letter-spacing:0.113px;">States</span>
<svg class="i" style="left:926.4px;top:531.1px;" width="7.4" height="9" viewBox="0 0 8 10"><path d="M4 0 L7 2.7 H1 Z M1 7.3 H7 L4 10 Z" fill="#444"/><rect x="0" y="3.4" width="8" height="1.1" fill="#444"/><rect x="0" y="5.5" width="8" height="1.1" fill="#444"/></svg>
<div class="b" style="left:64px;top:581px;width:1285px;height:3px;background:#fff;"></div>
<div class="b" style="left:1198.8px;top:541.8px;width:23px;height:24px;background:rgba(80,178,203,0.66);border-radius:50%;box-shadow:1.5px 2px 3px rgba(20,60,100,0.28);"></div>
<svg class="i" style="left:1203.6px;top:547.2px;" width="14" height="13" viewBox="0 0 14 13"><path d="M7.2 0.8 C10.6 0.8 13 2.8 13 5.6 C13 8.4 10.6 10.4 7.2 10.4 C6.2 10.4 5.4 10.3 4.6 10 L1.6 12 L2.6 8.8 C1.8 7.9 1.4 6.8 1.4 5.6 C1.4 2.8 3.8 0.8 7.2 0.8 Z" fill="rgba(255,255,255,0.12)" stroke="rgba(255,255,255,0.8)" stroke-width="1.2" stroke-linejoin="round"/></svg>
<div class="b" style="left:1243px;top:532px;width:97px;height:41px;background:#3697bc;border-radius:21px;"></div>
<svg class="i" style="left:1262.9px;top:543.8px;" width="18" height="18" viewBox="0 0 18 18"><circle cx="9" cy="9" r="8" fill="none" stroke="#0b2a45" stroke-width="2"/></svg>
<span class="t" style="left:1268.04px;top:547px;font-size:13px;color:#0b2a45;font-weight:700;letter-spacing:0.113px;">?</span>
<span class="t" style="left:1288.49px;top:548px;font-size:13px;color:#0b2a45;font-weight:700;letter-spacing:1.048px;-webkit-text-stroke:0.35px #0b2a45;">Help</span>
<svg class="i" style="left:17px;top:9.5px;" width="22" height="19.4" viewBox="0 0 22 19.4"><path d="M10.8 0 L0.1 9.6 Q0 10 0.5 10 H3.3 V19.2 H8.4 V13.4 H14.2 V19.2 H19 V10 H21.5 Q22 10 21.9 9.6 Z" fill="#c6c6c6"/></svg>
<svg class="i" style="left:16.8px;top:46px;" width="22" height="17" viewBox="0 0 22 17"><path d="M1.5 0.2 H12.7 Q13.7 0.2 13.7 1.2 V2.9 H17.4 Q17.9 2.9 18.3 3.4 L21 6.6 Q21.4 7.1 21.4 7.7 V12.3 H0.5 V1.2 Q0.5 0.2 1.5 0.2 Z" fill="#c6c6c6"/><path d="M14.9 4.1 H17 L19.6 7.2 H14.9 Z" fill="#232326"/><circle cx="5.4" cy="13.6" r="3.7" fill="#232326"/><circle cx="16.6" cy="13.6" r="3.7" fill="#232326"/><circle cx="5.4" cy="13.7" r="2.8" fill="#c6c6c6"/><circle cx="16.6" cy="13.7" r="2.8" fill="#c6c6c6"/><circle cx="5.4" cy="13.7" r="1.1" fill="#232326"/><circle cx="16.6" cy="13.7" r="1.1" fill="#232326"/></svg>
<span class="t" style="left:9.89px;top:68px;font-size:10.5px;color:#fff;letter-spacing:-0.316px;-webkit-text-stroke:0.3px #fff;">Delivery</span>
<svg class="i" style="left:21.4px;top:89.9px;" width="13.4" height="20.8" viewBox="0 0 13.4 20.8"><path d="M6.7 0 V20.8" stroke="#dcdcdc" stroke-width="2.4"/><path d="M11.4 6.4 C11.2 3.9 9.3 2.9 6.7 2.9 C4 2.9 2.2 4.2 2.2 6.3 C2.2 8.7 4.2 9.5 6.8 10.3 C9.6 11.2 11.6 12.1 11.6 14.6 C11.6 16.9 9.6 18 6.8 18 C3.8 18 1.9 16.8 1.7 14.3" fill="none" stroke="#dcdcdc" stroke-width="3.1"/></svg>
<span class="t" style="left:14.29px;top:114px;font-size:10.5px;color:#fff;letter-spacing:-0.092px;-webkit-text-stroke:0.3px #fff;">Billing</span>
<svg class="i" style="left:17px;top:136.2px;" width="22" height="20.6" viewBox="0 0 22 20.6"><path d="M3.7 16.9 L13.6 7.2" stroke="#cdcdcd" stroke-width="4.6" stroke-linecap="round"/><circle cx="16" cy="5.9" r="5.7" fill="#cdcdcd"/><path d="M16.6 5.4 L19.4 -0.6 L24 3.4 L17.6 6.4 Z" fill="#242427"/><circle cx="3.6" cy="17" r="1.05" fill="#242427"/></svg>
<span class="t" style="left:3.56px;top:160px;font-size:10.5px;color:#fff;letter-spacing:-0.053px;-webkit-text-stroke:0.3px #fff;">Integration</span>
<svg class="i" style="left:17px;top:182px;" width="21.8" height="20.5" viewBox="0 0 22 22"><path d="M9.11 0.16 L12.89 0.16 L12.87 3.22 L15.18 4.18 L17.33 2.00 L20.00 4.67 L17.82 6.82 L18.78 9.13 L21.84 9.11 L21.84 12.89 L18.78 12.87 L17.82 15.18 L20.00 17.33 L17.33 20.00 L15.18 17.82 L12.87 18.78 L12.89 21.84 L9.11 21.84 L9.13 18.78 L6.82 17.82 L4.67 20.00 L2.00 17.33 L4.18 15.18 L3.22 12.87 L0.16 12.89 L0.16 9.11 L3.22 9.13 L4.18 6.82 L2.00 4.67 L4.67 2.00 L6.82 4.18 L9.13 3.22 Z M7.00 11.00 a4 4 0 1 0 8 0 a4 4 0 1 0 -8 0 Z" fill="#808080" fill-rule="evenodd" stroke="#808080" stroke-width="0.8" stroke-linejoin="round"/></svg>
<span class="t" style="left:10.06px;top:206px;font-size:10.5px;color:#fff;letter-spacing:-0.304px;-webkit-text-stroke:0.3px #fff;">Settings</span>
<svg class="i" style="left:17px;top:227.6px;" width="22" height="20.4" viewBox="0 0 22 20.4"><circle cx="4.5" cy="3.3" r="3.2" fill="#cdcdcd"/><circle cx="17.5" cy="3.3" r="3.2" fill="#cdcdcd"/><path d="M0 14.6 V11.2 Q0 7.6 3.4 7.6 H6 L6 14.6 Z" fill="#cdcdcd"/><path d="M22 14.6 V11.2 Q22 7.6 18.6 7.6 H16 L16 14.6 Z" fill="#cdcdcd"/><circle cx="11" cy="7.5" r="5.5" fill="#242427"/><path d="M1.9 20.4 V16.2 Q1.9 10.6 7.4 10.6 H14.6 Q20.1 10.6 20.1 16.2 V20.4 Z" fill="#242427"/><circle cx="11" cy="7.5" r="4.5" fill="#cdcdcd"/><path d="M4.4 20.4 Q2.9 20.4 2.9 18.8 V16.4 Q2.9 11.7 7.6 11.7 H14.4 Q19.1 11.7 19.1 16.4 V18.8 Q19.1 20.4 17.6 20.4 Z" fill="#cdcdcd"/></svg>
<span class="t" style="left:-1.81px;top:252px;font-size:10.5px;color:#fff;letter-spacing:-0.663px;-webkit-text-stroke:0.3px #fff;">Manage Users</span>
<span class="t" style="left:9.24px;top:522px;font-size:7px;color:#777;letter-spacing:0.033px;">Powered by</span>
<svg class="i" style="left:0px;top:532px;" width="11.8" height="11.8" viewBox="0 0 12 12"><g fill="none" stroke="#333" stroke-width="2" stroke-linejoin="miter"><path d="M6.9 2.1 L6 1.2 L1.2 6 L4.6 9.4"/><path d="M5.1 9.9 L6 10.8 L10.8 6 L7.4 2.6"/><path d="M3.9 5.1 L8.1 6.9" stroke-width="1.5"/><path d="M4.4 4.2 L5.6 3 M6.4 9 L7.6 7.8" stroke-width="1.3"/></g></svg>
<span class="t" style="left:14.51px;top:533px;font-size:11px;color:#484848;letter-spacing:0.854px;">nuVizz</span>
<span class="t" style="left:1.54px;top:547px;font-size:7px;color:#666;letter-spacing:-0.030px;">2024 nuVizz, Inc.</span>
<svg class="i" style="left:115.8px;top:93px;" width="16" height="16" viewBox="0 0 16 16"><circle cx="8" cy="8" r="8" fill="#888"/><path d="M8 3.4 V8.6 H12" fill="none" stroke="#fff" stroke-width="1.7"/></svg>
<svg class="i" style="left:723px;top:93px;" width="16" height="16" viewBox="0 0 16 16"><circle cx="8" cy="8" r="8" fill="#888"/><path d="M8 3.4 V8.6 H12" fill="none" stroke="#fff" stroke-width="1.7"/></svg>
<svg class="i" style="left:279.5px;top:94.5px;" width="15.5" height="12.6" viewBox="0 0 16 13"><path d="M8 0 A8 8 0 0 1 16 8 Q16 10.8 14.8 12.6 Q14.5 13 14 13 H2 Q1.5 13 1.2 12.6 Q0 10.8 0 8 A8 8 0 0 1 8 0 Z" fill="#888"/><g fill="#fff"><circle cx="8" cy="2.4" r="0.9"/><circle cx="3.8" cy="4.2" r="0.9"/><circle cx="2.2" cy="8.2" r="0.9"/><circle cx="13.8" cy="8.2" r="0.9"/><circle cx="8" cy="9.8" r="1.7"/></g><path d="M8 9.8 L11.6 3.8" stroke="#fff" stroke-width="1.3"/></svg>
<svg class="i" style="left:424.2px;top:92px;" width="12.7" height="18" viewBox="0 0 12 17"><path d="M6 0 A6 6 0 0 1 12 6 C12 9.4 8.2 13 6 17 C3.8 13 0 9.4 0 6 A6 6 0 0 1 6 0 Z" fill="#888"/><circle cx="6" cy="5.8" r="2.1" fill="#fff"/></svg>
<svg class="i" style="left:843.5px;top:93px;" width="13.5" height="15" viewBox="0 0 13.5 15"><circle cx="6.75" cy="2.6" r="1.9" fill="none" stroke="#888" stroke-width="1.3"/><path d="M3 4.2 H10.5 Q11.2 4.2 11.4 5 L13.4 13.8 Q13.6 15 12.4 15 H1.1 Q-0.1 15 0.1 13.8 L2.1 5 Q2.3 4.2 3 4.2 Z" fill="#888"/></svg>
<svg class="i" style="left:973px;top:92.6px;" width="12" height="15.8" viewBox="0 0 12 16"><path d="M6 0 C7.4 4 12 6.6 12 10.4 A6 6 0 0 1 0 10.4 C0 6.6 4.6 4 6 0 Z" fill="#888"/><path d="M2.6 10.4 A3.4 3.4 0 0 0 6 13.6" fill="none" stroke="#fff" stroke-width="1.2" stroke-linecap="round"/></svg>
<svg class="i" style="left:1099.6px;top:93.6px;" width="15.5" height="14.5" viewBox="0 0 15.5 14.5"><path d="M7.75 0 L15.5 2.6 L7.75 5.4 L0 2.6 Z" fill="#888"/><path d="M0 3.6 L7.2 6.2 V14.5 L0 11.6 Z" fill="#888"/><path d="M15.5 3.6 L8.3 6.2 V14.5 L15.5 11.6 Z" fill="#888"/><path d="M3.4 1.3 L11.4 4.2 V7.6 L10 8.1 V4.8 L2.2 1.8 Z" fill="#fff" opacity="0.85"/></svg>
<svg class="i" style="left:1231px;top:94.4px;" width="18" height="13.4" viewBox="0 0 18 13.4"><path d="M9 0 L18 3.4 L9 7.4 L0 3.4 Z" fill="#888"/><path d="M0 4.4 L9 8.4 L18 4.4 V7.4 L9 11.6 L0 7.4 Z" fill="#888"/><path d="M4 1.9 L13 5.6 M6.6 0.9 L15.4 4.6" stroke="#fff" stroke-width="0.8"/><path d="M1.6 8.2 V10.2 L4 11.4 V9.3 Z M7.6 11 V13.4 L10.4 13.4 V11 L9 11.6 Z M14 9.3 V11.4 L16.4 10.2 V8.2 Z" fill="#888"/></svg>
<svg class="i" style="left:618px;top:51.1px;" width="13" height="12.6" viewBox="0 0 12 12"><path d="M0 1.2 Q0 0 1.2 0 H5.6 Q6.2 0 6.6 0.4 L11.6 5.4 Q12.4 6.2 11.6 7 L7 11.6 Q6.2 12.4 5.4 11.6 L0.4 6.6 Q0 6.2 0 5.6 Z" fill="#7f858b"/><circle cx="2.8" cy="2.8" r="1.1" fill="#e1e1e1"/></svg>
<svg class="i" style="left:845.9px;top:51.8px;" width="13.8" height="11" viewBox="0 0 14 11"><path d="M3.4 0 H10.6 Q11.4 0 11.7 0.8 L12.8 3.8 Q14 4.2 14 5.4 V8.6 H12.8 V10 Q12.8 11 11.8 11 H11 Q10 11 10 10 V8.6 H4 V10 Q4 11 3 11 H2.2 Q1.2 11 1.2 10 V8.6 H0 V5.4 Q0 4.2 1.2 3.8 L2.3 0.8 Q2.6 0 3.4 0 Z" fill="#858b91"/><path d="M3.6 1.4 H10.4 L11.2 3.8 H2.8 Z" fill="#e9e9e9"/><circle cx="2.6" cy="6.2" r="1" fill="#e9e9e9"/><circle cx="11.4" cy="6.2" r="1" fill="#e9e9e9"/></svg>
<svg class="i" style="left:1085.6px;top:51.4px;" width="11.6" height="11.2" viewBox="0 0 12 11.5"><path d="M2.4 0 H9.6 V1.6 H2.4 Z" fill="#858b91"/><path d="M3 1.6 H9 Q9 5.4 6 5.4 Q3 5.4 3 1.6 Z" fill="#858b91"/><path d="M0 11.5 V9.6 Q0 7 3 6.6 L6 9 L9 6.6 Q12 7 12 9.6 V11.5 Z" fill="#858b91"/></svg>
<svg class="i" style="left:918.3px;top:52.6px;" width="10.4" height="9.8" viewBox="0 0 10.4 9.8"><path d="M0.4 7.6 L0 9.6 L2.2 9.2 L8 3.4 L6.4 1.8 Z M7 1.2 L8 0.2 Q8.4 -0.1 8.8 0.2 L9.8 1.2 Q10.1 1.6 9.8 2 L8.7 3 Z" fill="#3d82d6"/><rect x="4" y="8.6" width="6.4" height="1.2" fill="#3d82d6"/></svg>
<svg class="i" style="left:1162.4px;top:52.6px;" width="10.4" height="9.8" viewBox="0 0 10.4 9.8"><path d="M0.4 7.6 L0 9.6 L2.2 9.2 L8 3.4 L6.4 1.8 Z M7 1.2 L8 0.2 Q8.4 -0.1 8.8 0.2 L9.8 1.2 Q10.1 1.6 9.8 2 L8.7 3 Z" fill="#3d82d6"/><rect x="4" y="8.6" width="6.4" height="1.2" fill="#3d82d6"/></svg>
<svg class="i" style="left:1345.5px;top:45.6px;" width="8" height="4" viewBox="0 0 8 4"><path d="M0 4 L4 0 L8 4 Z" fill="#8a8a8a"/></svg>
<svg class="i" style="left:1345.5px;top:569.8px;" width="8" height="4" viewBox="0 0 8 4"><path d="M0 0 L4 4 L8 0 Z" fill="#505050"/></svg>
</div></body></html>
